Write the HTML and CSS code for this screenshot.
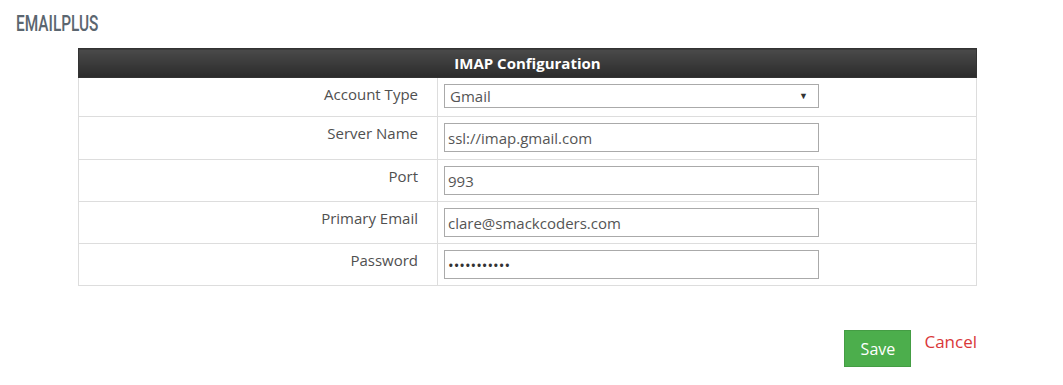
FILE: index.html
```html
<!DOCTYPE html>
<html lang="en">
<head>
  <meta charset="UTF-8">
  <title>EmailPlus - IMAP Configuration</title>
  <link rel="stylesheet" href="styles.css">
</head>
<body>

  <!-- Module title -->
  <div class="page">
    <h1 class="module-title"><span>EMAILPLUS</span></h1>

    <!-- IMAP settings -->
    <table class="config-table">
      <tr>
        <th colspan="2">IMAP Configuration</th>
      </tr>
      <tr class="row-select">
        <td class="label">Account Type</td>
        <td class="field">
          <div class="select-wrap">
            <select>
              <option>Gmail</option>
              <option>Yahoo</option>
              <option>Other</option>
            </select>
          </div>
        </td>
      </tr>
      <tr class="row-server">
        <td class="label">Server Name</td>
        <td class="field"><input type="text" value="ssl://imap.gmail.com"></td>
      </tr>
      <tr>
        <td class="label">Port</td>
        <td class="field"><input type="text" value="993"></td>
      </tr>
      <tr>
        <td class="label">Primary Email</td>
        <td class="field"><input type="text" value="clare@smackcoders.com"></td>
      </tr>
      <tr>
        <td class="label">Password</td>
        <td class="field"><input type="password" value="secretpass1"></td>
      </tr>
    </table>

    <!-- Actions -->
    <div class="actions">
      <button class="btn-save">Save</button>
      <a href="#" class="cancel-link">Cancel</a>
    </div>
  </div>

</body>
</html>
```

FILE: styles.css
```css
/* General */
body {
  margin: 0;
  background: #fff;
  font-family: 'Open Sans', sans-serif;
  font-size: 15px;
  color: #555;
}

.page {
  padding: 0 16px;
}

/* Title */
.module-title {
  margin: 0;
  padding-top: 11px;
  height: 37px;
  font-family: 'Roboto', sans-serif;
  font-weight: 500;
  font-size: 22px;
  line-height: 26px;
  color: #5b6670;
}

.module-title span {
  display: inline-block;
  transform: scaleX(0.7);
  transform-origin: left;
}

/* Config table */
.config-table {
  width: 899px;
  margin-left: 62px;
  border-collapse: collapse;
  border: 1px solid #ddd;
}

.config-table th {
  height: 28px;
  padding: 0;
  background: linear-gradient(#4a4a4a, #2b2b2b);
  color: #fff;
  font-size: 15px;
  font-weight: bold;
  text-align: center;
  border: 1px solid #333;
}

.config-table td {
  border: 1px solid #ddd;
  height: 29px;
  padding: 6px;
  vertical-align: top;
}

.config-table td.label {
  width: 339px;
  padding: 6px 19px 0 0;
  text-align: right;
  line-height: 20px;
  color: #505050;
}

.row-select td {
  height: 26px;
}

.row-server td {
  height: 30px;
}

.field input,
.field select {
  box-sizing: border-box;
  width: 375px;
  border: 1px solid #aaa;
  font-family: 'Open Sans', sans-serif;
  font-size: 15px;
  color: #555;
  background: #fff;
  margin: 0;
}

.field input {
  height: 29px;
  padding: 0 3px;
}

.field input[type=password] {
  color: #333;
}

.select-wrap {
  position: relative;
  width: 375px;
}

.field select {
  height: 24px;
  padding: 0 5px;
  appearance: none;
  -webkit-appearance: none;
  border-radius: 0;
}

.select-wrap::after {
  content: "\25BC";
  position: absolute;
  right: 11px;
  top: 5px;
  font-size: 9px;
  color: #333;
  pointer-events: none;
}

/* Actions */
.actions {
  width: 899px;
  margin-left: 62px;
  margin-top: 44px;
  display: flex;
  justify-content: flex-end;
  align-items: flex-start;
}

.btn-save {
  width: 67px;
  height: 37px;
  background: #4cae4c;
  border: 1px solid #449d44;
  color: #fff;
  font-family: 'Open Sans', sans-serif;
  font-size: 16px;
  cursor: pointer;
}

.cancel-link {
  margin-left: 13px;
  margin-top: 0;
  color: #d9383a;
  font-size: 17px;
  text-decoration: none;
}
```
